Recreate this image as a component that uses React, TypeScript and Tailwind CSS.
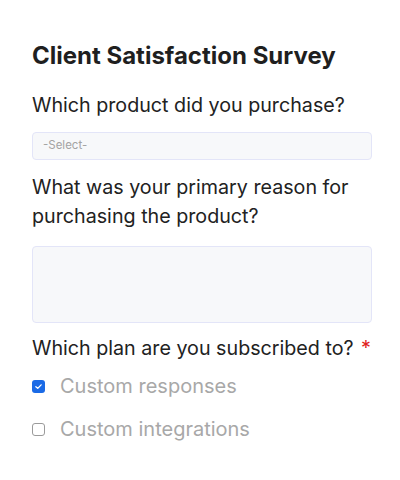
import React from "react";

const options = [
  { label: "Custom responses", checked: true },
  { label: "Custom integrations", checked: false },
];

export default function App() {
  return (
    <div className="w-[400px] h-[480px] bg-white font-['Inter',sans-serif] text-[#222]">
      <div className="pl-8 pr-7 pt-[42px] flex flex-col">
        <h1 className="text-[24px] leading-[28px] font-bold text-[#1f1f1f]">Client Satisfaction Survey</h1>

        <p className="mt-[21px] text-[19.7px] leading-[28px]">Which product did you purchase?</p>
        <div className="mt-[13px] h-[28px] rounded-[4px] border border-[#e3e5f8] bg-[#f7f8fa] flex items-center px-[10px]">
          <span className="text-[11.5px] text-[#a3a3a3]">-Select-</span>
        </div>

        <p className="mt-[13px] text-[19.7px] leading-[29px]">
          What was your primary reason for purchasing the product?
        </p>
        <div className="mt-[15px] h-[77px] rounded-[4px] border border-[#e3e5f8] bg-[#f7f8fa]" />

        <p className="mt-[11px] text-[19.7px] leading-[28px] whitespace-nowrap">
          Which plan are you subscribed to? <span className="ml-[2px] text-[#e02020]">*</span>
        </p>

        <div className="mt-[10px] flex flex-col gap-[15px]">
          {options.map((o) => (
            <label key={o.label} className="flex items-center gap-[15px] h-[28px]">
              {o.checked ? (
                <span className="w-[13px] h-[13px] rounded-[3px] bg-[#1a6ae6] flex items-center justify-center">
                  <svg width="9" height="9" viewBox="0 0 12 12" fill="none">
                    <path d="M2.5 6.2 5 8.5 9.5 3.8" stroke="white" strokeWidth="1.8" strokeLinecap="round" strokeLinejoin="round" />
                  </svg>
                </span>
              ) : (
                <span className="w-[13px] h-[13px] rounded-[3px] border border-[#9b9b9b] bg-white" />
              )}
              <span className="text-[20px] leading-[28px] text-[#a8a8a8]">{o.label}</span>
            </label>
          ))}
        </div>
      </div>
    </div>
  );
}
